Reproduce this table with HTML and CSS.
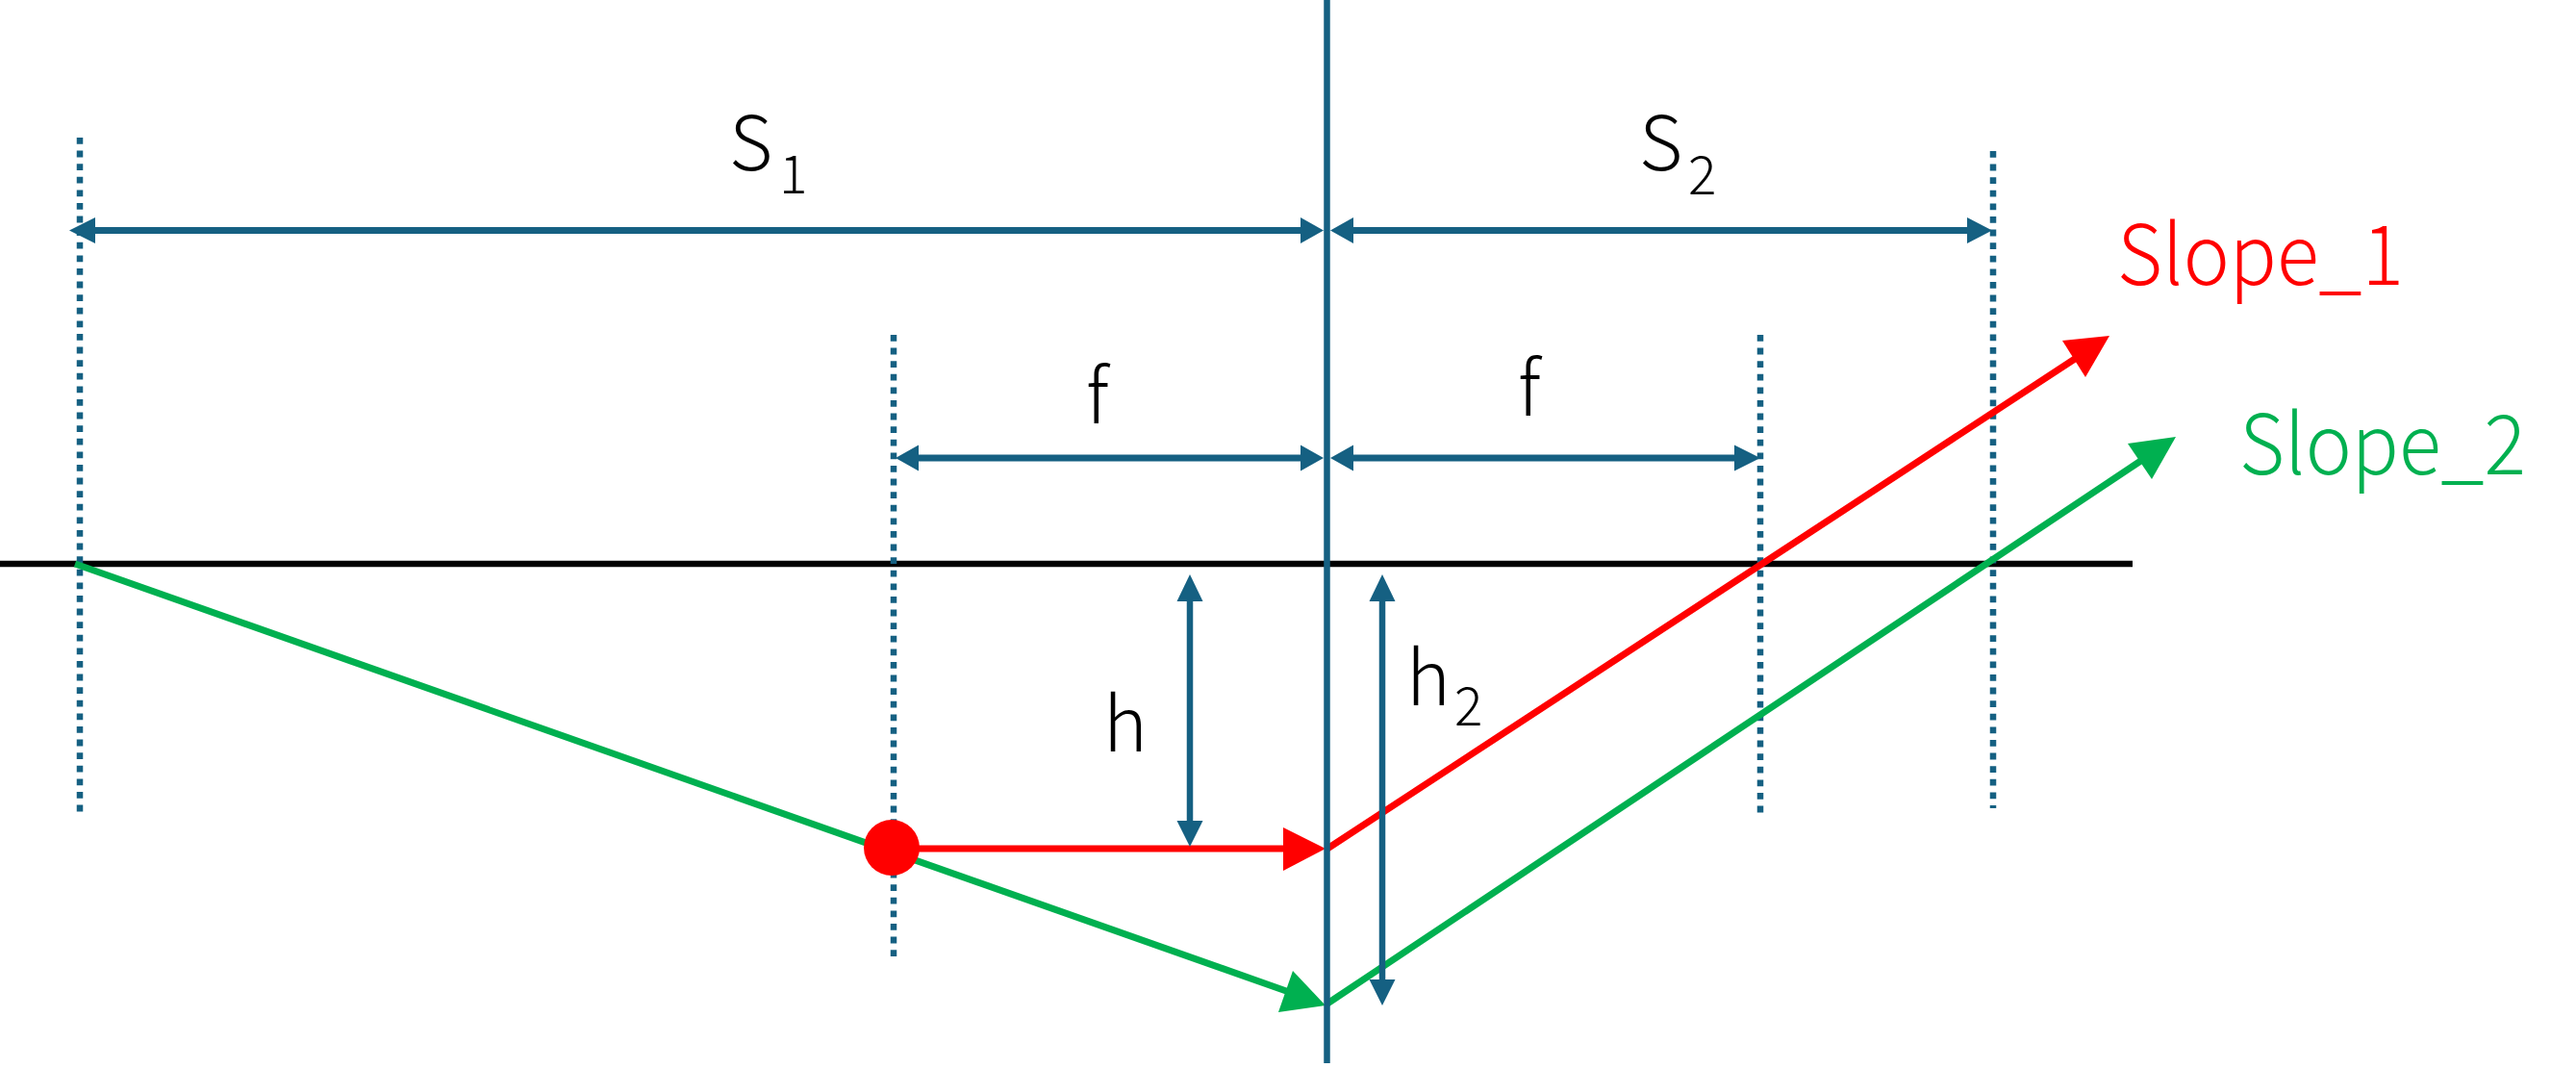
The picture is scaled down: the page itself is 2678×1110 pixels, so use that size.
FILE: index.html
```html
<!DOCTYPE html>
<html lang="en">
<head>
<meta charset="utf-8">
<title>Lens diagram</title>
<link rel="stylesheet" href="styles.css">
</head>
<body>
<div class="canvas">
<svg class="diagram" viewBox="0 0 2678 1110" width="2678" height="1110" xmlns="http://www.w3.org/2000/svg">
  <!-- optical axis -->
  <line class="axis" x1="0" y1="586" x2="2217" y2="586"/>

  <!-- dotted guides -->
  <line class="guide" x1="83" y1="143" x2="83" y2="845"/>
  <line class="guide" x1="929" y1="348" x2="929" y2="998"/>
  <line class="guide" x1="1830" y1="348" x2="1830" y2="845"/>
  <line class="guide" x1="2072" y1="157" x2="2072" y2="840"/>

  <!-- green ray -->
  <line class="ray green" x1="78" y1="586" x2="1340" y2="1031"/>
  <polygon class="fill-green" points="1378,1045 1344,1009 1329,1052"/>
  <line class="ray green" x1="1380" y1="1043" x2="2230" y2="476"/>
  <polygon class="fill-green" points="2262,454 2212,461 2237,498"/>

  <!-- red ray -->
  <line class="ray red" x1="927" y1="882" x2="1338" y2="882"/>
  <polygon class="fill-red" points="1378,882 1334,860 1334,905"/>
  <line class="ray red" x1="1380" y1="882" x2="2160" y2="371"/>
  <polygon class="fill-red" points="2193,349 2144,354 2168,392"/>
  <circle class="fill-red" cx="927" cy="881" r="29"/>

  <!-- lens -->
  <line class="lens" x1="1379.5" y1="0" x2="1379.5" y2="1105"/>

  <!-- S1 / S2 dimension -->
  <line class="dim" x1="97" y1="239.5" x2="1354" y2="239.5"/>
  <polygon class="fill-blue" points="72,239.5 99,226 99,253"/>
  <polygon class="fill-blue" points="1376,239.5 1352,226 1352,253"/>
  <line class="dim" x1="1405" y1="239.5" x2="2047" y2="239.5"/>
  <polygon class="fill-blue" points="1383,239.5 1407,226 1407,253"/>
  <polygon class="fill-blue" points="2071,239.5 2045,226 2045,253"/>

  <!-- f dimensions -->
  <line class="dim" x1="953" y1="476" x2="1354" y2="476"/>
  <polygon class="fill-blue" points="931,476 955,462.5 955,489.5"/>
  <polygon class="fill-blue" points="1376,476 1352,462.5 1352,489.5"/>
  <line class="dim" x1="1405" y1="476" x2="1805" y2="476"/>
  <polygon class="fill-blue" points="1383,476 1407,462.5 1407,489.5"/>
  <polygon class="fill-blue" points="1830,476 1803,462.5 1803,489.5"/>

  <!-- h dimension -->
  <line class="dim-thin" x1="1237" y1="622" x2="1237" y2="856"/>
  <polygon class="fill-blue" points="1237,597 1223.5,625 1250.5,625"/>
  <polygon class="fill-blue" points="1237,880 1223.5,853 1250.5,853"/>

  <!-- h2 dimension -->
  <line class="dim-thin" x1="1437" y1="622" x2="1437" y2="1021"/>
  <polygon class="fill-blue" points="1437,597 1423.5,625 1450.5,625"/>
  <polygon class="fill-blue" points="1437,1045 1423.5,1018 1450.5,1018"/>

  <!-- labels -->
  <text class="label" x="758" y="177">S</text>
  <text class="label sub" x="810" y="201">1</text>
  <text class="label" x="1704" y="177">S</text>
  <text class="label sub" x="1755" y="202">2</text>
  <text class="label" x="1129" y="440">f</text>
  <text class="label" x="1578" y="432">f</text>
  <text class="label" x="1147" y="781">h</text>
  <text class="label" x="1462" y="733">h</text>
  <text class="label sub" x="1512" y="754">2</text>
  <text class="label big red-text" x="2201" y="296" textLength="298" lengthAdjust="spacingAndGlyphs">Slope_1</text>
  <text class="label big green-text" x="2328" y="493" textLength="298" lengthAdjust="spacingAndGlyphs">Slope_2</text>
</svg>
</div>
</body>
</html>
```

FILE: styles.css
```css
html, body {
  margin: 0;
  padding: 0;
  background: #ffffff;
}

.canvas {
  width: 2678px;
  height: 1110px;
  overflow: hidden;
}

.diagram {
  display: block;
}

.axis {
  stroke: #000000;
  stroke-width: 6.5;
}

.guide {
  stroke: #156082;
  stroke-width: 6.5;
  stroke-dasharray: 6.8 6.8;
}

.lens {
  stroke: #156082;
  stroke-width: 6.5;
}

.dim {
  stroke: #156082;
  stroke-width: 7;
}

.dim-thin {
  stroke: #156082;
  stroke-width: 6.5;
}

.ray {
  stroke-width: 7;
}

.ray.green {
  stroke: #00b050;
}

.ray.red {
  stroke: #ff0000;
}

.fill-green {
  fill: #00b050;
}

.fill-red {
  fill: #ff0000;
}

.fill-blue {
  fill: #156082;
}

.label {
  font-family: "Noto Sans CJK JP", "Noto Sans", sans-serif;
  font-weight: 300;
  font-size: 78px;
  fill: #000000;
}

.label.big {
  font-size: 86px;
}

.label.sub {
  font-size: 55px;
}

.red-text {
  fill: #ff0000;
}

.green-text {
  fill: #00b050;
}
```
